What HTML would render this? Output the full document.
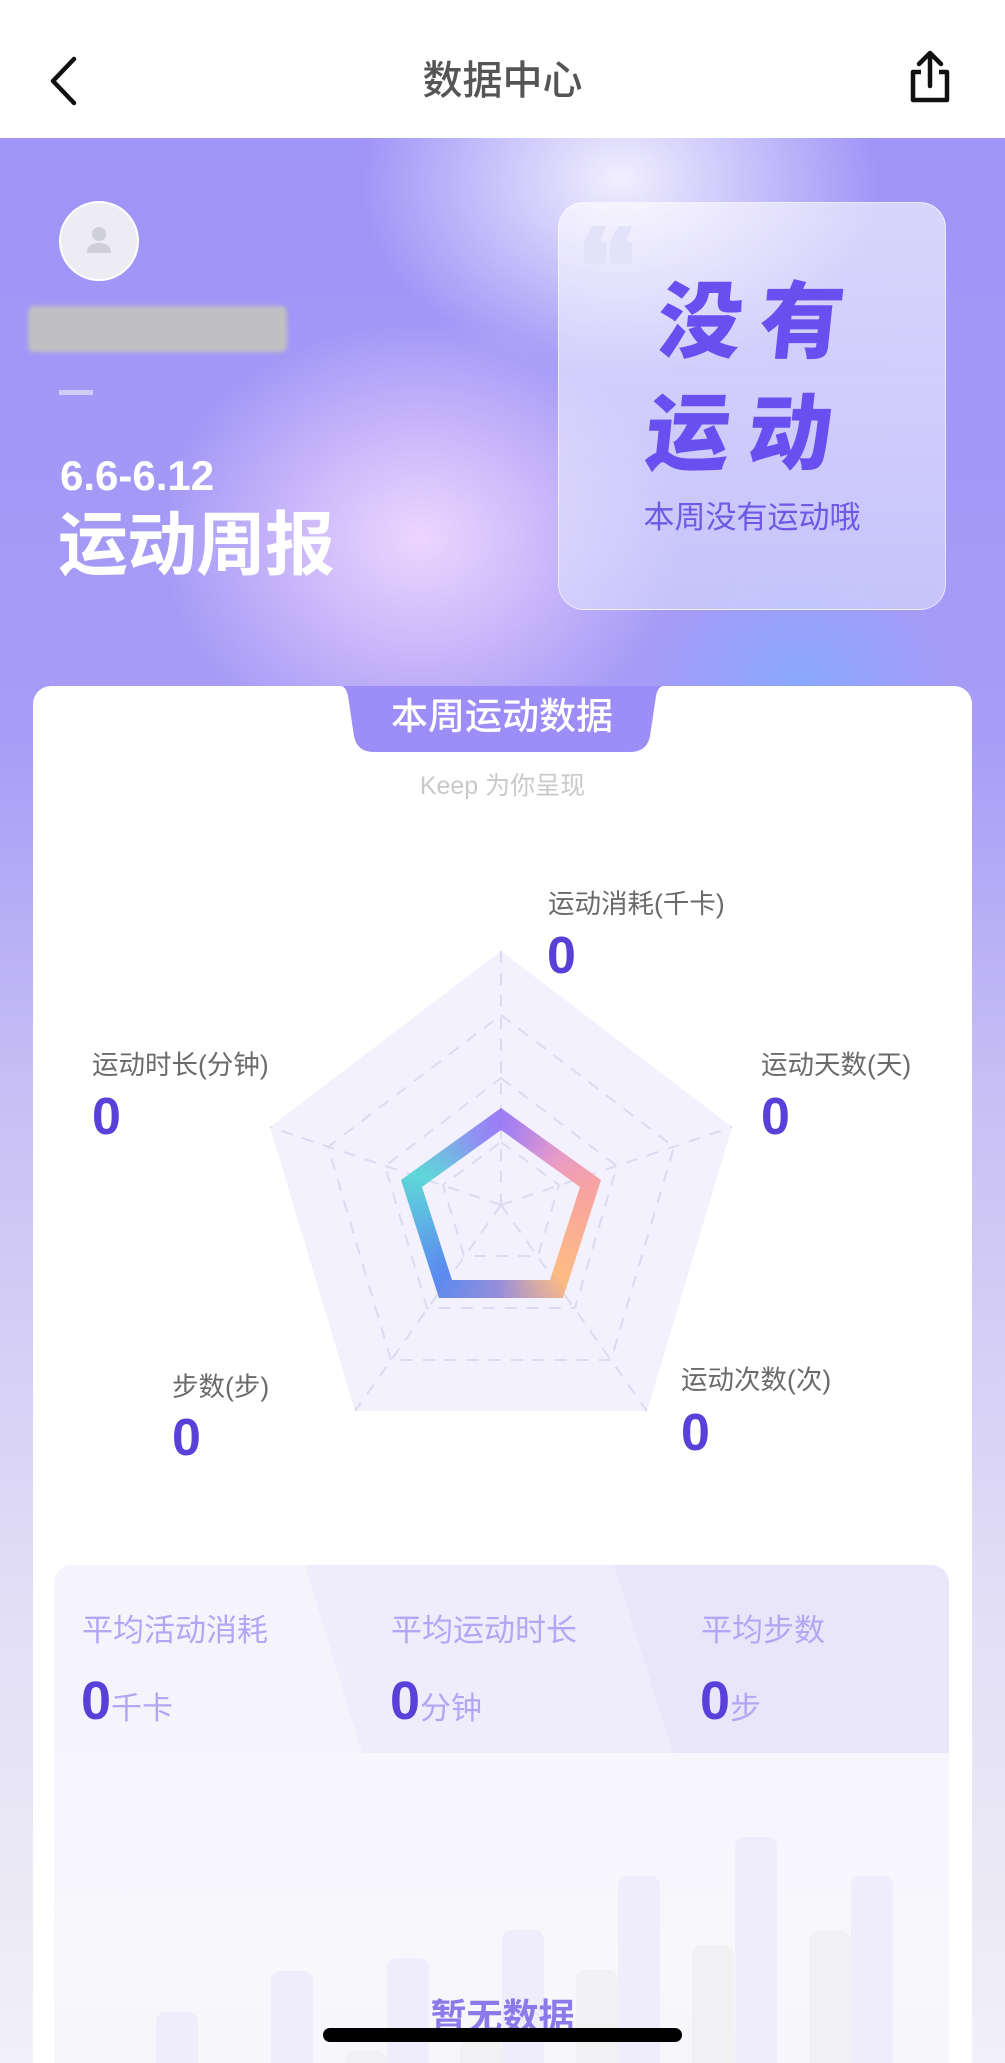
<!DOCTYPE html>
<html><head><meta charset="utf-8"><style>
*{margin:0;padding:0;box-sizing:border-box}
html,body{width:1005px;height:2063px;overflow:hidden}
body{font-family:"Liberation Sans","Noto Sans CJK SC",sans-serif}
#root{position:relative;width:1005px;height:2063px;overflow:hidden;
background:linear-gradient(180deg,#a397f6 680px,#c8c0f5 1100px,#e2def6 1600px,#f1f0f6 2063px)}
.abs{position:absolute}
.nav{left:0;top:0;width:1005px;height:138px;background:#fff}
.hero{left:0;top:138px;width:1005px;height:600px;
background:
radial-gradient(ellipse 260px 200px at 620px 40px,rgba(255,255,255,.85),rgba(255,255,255,0)),
radial-gradient(ellipse 260px 220px at 420px 400px,rgba(245,220,255,.9),rgba(245,220,255,0)),
radial-gradient(ellipse 160px 120px at 800px 540px,rgba(130,170,255,.8),rgba(130,170,255,0)),
linear-gradient(180deg,#9f94f7 0%,#a89cf6 100%)}
.lbl{font-size:26.5px;color:#6a6a6a;white-space:nowrap}
.zero{font-size:52px;font-weight:bold;color:#5a3fd8;line-height:1}
.sl{font-size:31px;color:#b4a6f4;white-space:nowrap}
.sv{font-size:54px;font-weight:bold;color:#5a3fd8;line-height:1}
.su{font-size:31px;color:#b4a6f4;font-weight:normal}
</style></head><body><div id="root">
<div class="abs nav"></div>
<svg class="abs" style="left:46px;top:56px" width="34" height="50" viewBox="0 0 34 50"><path d="M28 3 L7 25 L28 47" fill="none" stroke="#111" stroke-width="4.5" stroke-linecap="round" stroke-linejoin="round"/></svg>
<div class="abs" style="left:0;width:1005px;top:55px;text-align:center;font-size:40px;color:#555;line-height:52px;font-weight:500">数据中心</div>
<svg class="abs" style="left:904px;top:48px" width="52" height="58" viewBox="0 0 52 58"><path d="M26 6 V38 M15 16 L26 5 L37 16" fill="none" stroke="#111" stroke-width="4.5" stroke-linecap="round" stroke-linejoin="round"/><path d="M17 24 H9 V52 H43 V24 H35" fill="none" stroke="#111" stroke-width="4.5" stroke-linejoin="round"/></svg>

<div class="abs hero"></div>
<div class="abs" style="left:59px;top:201px;width:80px;height:80px;border-radius:50%;background:#ececf2;border:2px solid #fff"></div>
<svg class="abs" style="left:83px;top:224px" width="32" height="32" viewBox="0 0 32 32"><circle cx="16" cy="10" r="7" fill="#cfcfd6"/><path d="M4 29 Q4 19 16 19 Q28 19 28 29Z" fill="#cfcfd6"/></svg>
<div class="abs" style="left:28px;top:306px;width:259px;height:46px;background:#c0c0c2;border-radius:6px;filter:blur(2px)"></div>
<div class="abs" style="left:59px;top:390px;width:34px;height:5px;background:#d4ccf8"></div>
<div class="abs" style="left:60px;top:452px;font-size:42px;font-weight:bold;color:#fff;line-height:48px">6.6-6.12</div>
<div class="abs" style="left:58px;top:505px;font-size:70px;font-weight:bold;color:#fff;line-height:80px;letter-spacing:-1px">运动周报</div>

<div class="abs" style="left:558px;top:202px;width:388px;height:408px;border-radius:26px;background:linear-gradient(180deg,rgba(255,255,255,.6),rgba(225,230,255,.55));border:1px solid rgba(255,255,255,.6)"></div>
<svg class="abs" style="left:584px;top:226px" width="56" height="40" viewBox="0 0 56 40"><path d="M8 0 H22 L16 16 H22 V38 H0 V16Z M34 0 H48 L42 16 H48 V38 H26 V16Z" fill="#e4e2f8"/></svg>
<div class="abs" style="left:652px;top:266px;font-size:84px;font-weight:900;color:#6a4ff0;line-height:112px;letter-spacing:18px;transform:skewX(-6deg)">没有<br>运动</div>
<div class="abs" style="left:558px;width:388px;top:498px;text-align:center;font-size:31px;color:#6f58e6;line-height:40px">本周没有运动哦</div>

<div class="abs" style="left:33px;top:686px;width:939px;height:1420px;background:#fff;border-radius:18px"></div>
<svg class="abs" style="left:340px;top:686px" width="324" height="68" viewBox="0 0 324 68"><path d="M0 0 H324 Q318 0 316 10 L310 50 Q307 66 290 66 H34 Q17 66 14 50 L8 10 Q6 0 0 0Z" fill="#9d8df7"/></svg>
<div class="abs" style="left:340px;width:324px;top:694px;text-align:center;font-size:37px;color:#fff;line-height:46px;font-weight:500">本周运动数据</div>
<div class="abs" style="left:0;width:1005px;top:770px;text-align:center;font-size:25px;color:#c9c9cc;line-height:32px">Keep 为你呈现</div>

<svg class="abs" style="left:0;top:900px" width="1005" height="560" viewBox="0 900 1005 560">
<polygon points="501,951 732,1127 647,1411 355,1411 270,1127" fill="#f3f1fd"/>
<g fill="none" stroke="#dcdaf0" stroke-width="2" stroke-dasharray="12 10">
<polygon points="501,1015 674,1147 611,1360 391,1360 328,1147"/>
<polygon points="501,1078 617,1166 575,1308 427,1308 385,1166"/>
<polygon points="501,1142 559,1185 538,1256 464,1256 443,1185"/>
<path d="M501 1205 L501 951 M501 1205 L732 1127 M501 1205 L647 1411 M501 1205 L355 1411 M501 1205 L270 1127"/>
</g>
</svg>
<div class="abs" style="left:396px;top:1100px;width:210px;height:200px;
background:conic-gradient(from 0deg at 105px 105px,#9c7cf6 0deg,#e79bc8 50deg,#f8a3a0 80deg,#fdbb84 140deg,#9a8fd8 180deg,#5b8af0 220deg,#5fd7d8 290deg,#8f90f2 340deg,#9c7cf6 360deg);
clip-path:polygon(evenodd,105px 8px,205px 80px,167px 198px,43px 198px,5px 80px,105px 8px,105px 30px,26px 87px,56px 180px,154px 180px,184px 87px,105px 30px)"></div>

<div class="abs lbl" style="left:548px;top:882px">运动消耗(千卡)</div>
<div class="abs zero" style="left:547px;top:930px">0</div>
<div class="abs lbl" style="left:92px;top:1043px">运动时长(分钟)</div>
<div class="abs zero" style="left:92px;top:1091px">0</div>
<div class="abs lbl" style="left:761px;top:1043px">运动天数(天)</div>
<div class="abs zero" style="left:761px;top:1091px">0</div>
<div class="abs lbl" style="left:172px;top:1365px">步数(步)</div>
<div class="abs zero" style="left:172px;top:1412px">0</div>
<div class="abs lbl" style="left:681px;top:1358px">运动次数(次)</div>
<div class="abs zero" style="left:681px;top:1407px">0</div>

<div class="abs" style="left:54px;top:1565px;width:895px;height:540px;border-radius:18px;overflow:hidden;background:linear-gradient(180deg,#f7f6fd,#f7f7fb)">
<svg class="abs" style="left:0;top:0" width="895" height="188"><polygon points="0,0 895,0 895,188 0,188" fill="#f5f4fd"/><polygon points="251,0 895,0 895,188 308,188" fill="#efedfb"/><polygon points="560,0 895,0 895,188 619,188" fill="#e9e6fa"/></svg>
</div>
<div class="abs sl" style="left:82px;top:1605px">平均活动消耗</div>
<div class="abs sl" style="left:391px;top:1605px">平均运动时长</div>
<div class="abs sl" style="left:701px;top:1605px">平均步数</div>
<div class="abs sv" style="left:81px;top:1674px">0<span class="su">千卡</span></div>
<div class="abs sv" style="left:390px;top:1674px">0<span class="su">分钟</span></div>
<div class="abs sv" style="left:700px;top:1674px">0<span class="su">步</span></div>

<svg class="abs" style="left:0;top:1800px" width="1005" height="263">
<g fill="#f1f1f4">
<rect x="345" y="251" width="42" height="60" rx="10"/><rect x="460" y="240" width="42" height="60" rx="10"/>
<rect x="576" y="170" width="42" height="120" rx="10"/><rect x="692" y="145" width="42" height="140" rx="10"/><rect x="809" y="131" width="42" height="150" rx="10"/>
</g>
<g fill="#efedfb">
<rect x="156" y="212" width="42" height="80" rx="10"/><rect x="271" y="171" width="42" height="120" rx="10"/><rect x="387" y="158" width="42" height="130" rx="10"/>
<rect x="502" y="130" width="42" height="160" rx="10"/><rect x="618" y="76" width="42" height="200" rx="10"/><rect x="735" y="37" width="42" height="240" rx="10"/><rect x="851" y="76" width="42" height="200" rx="10"/>
</g>
</svg>
<div class="abs" style="left:0;width:1005px;top:1994px;text-align:center;font-size:36px;color:#8c7aea;font-weight:bold;line-height:46px">暂无数据</div>
<div class="abs" style="left:323px;top:2028px;width:359px;height:14px;border-radius:7px;background:#000"></div>
</div></body></html>
